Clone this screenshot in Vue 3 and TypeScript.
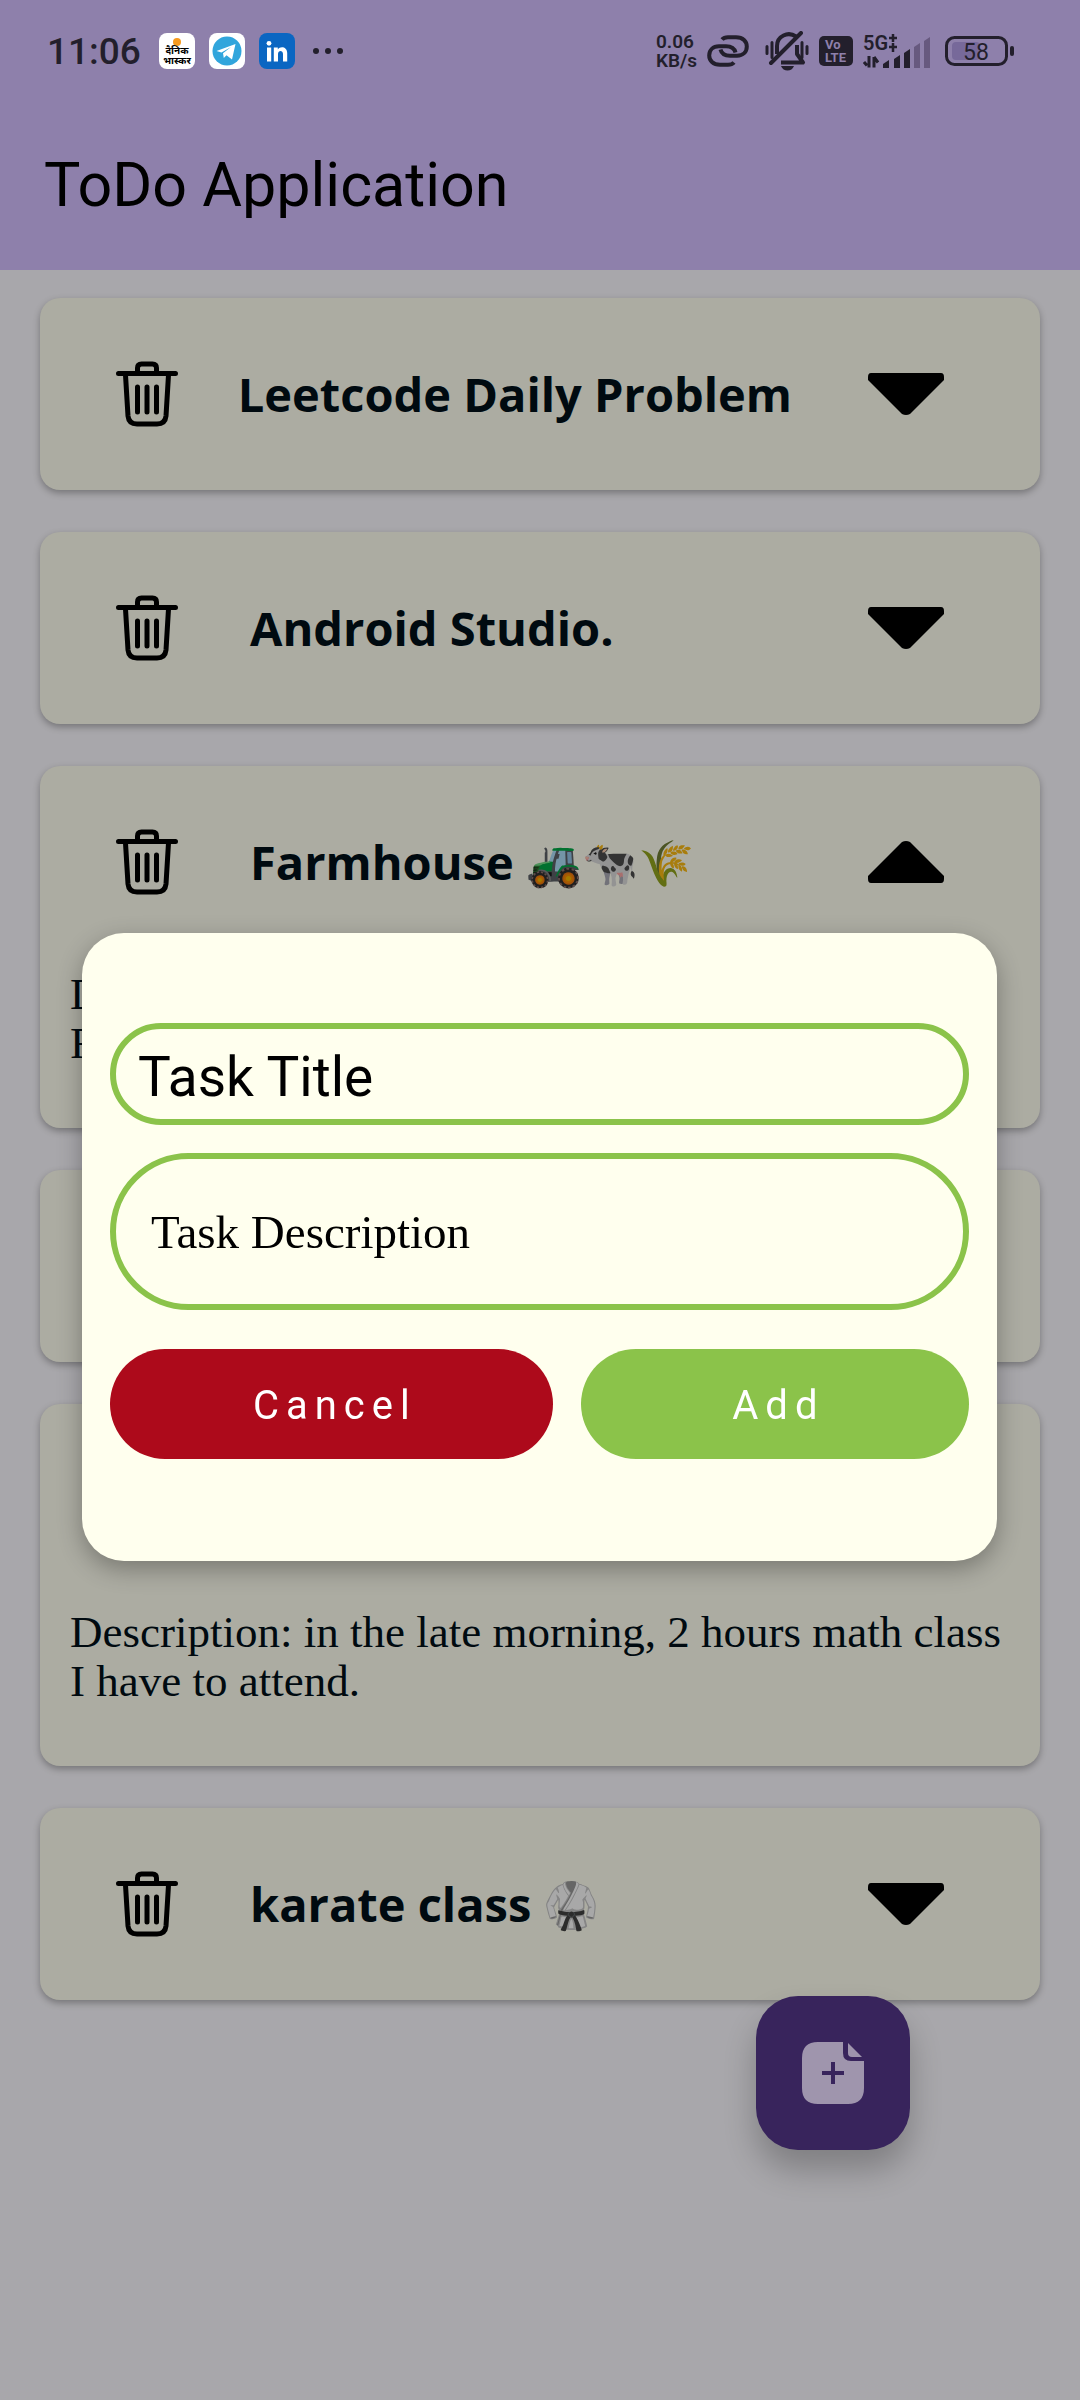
<script setup lang="ts">
import { ref } from 'vue'

interface Task {
  id: number
  title: string
  emoji: string
  description: string
  open: boolean
}

const tasks = ref<Task[]>([
  { id: 1, title: 'Leetcode Daily Problem', emoji: '', description: '', open: false },
  { id: 2, title: 'Android Studio.', emoji: '', description: '', open: false },
  { id: 3, title: 'Farmhouse', emoji: '🚜🐄🌾', description: 'Description:\nFarmhouse', open: true },
  { id: 4, title: '', emoji: '', description: '', open: false },
  {
    id: 5,
    title: '',
    emoji: '',
    description: 'Description: in the late morning, 2 hours math class I have to attend.',
    open: true,
  },
  { id: 6, title: 'karate class', emoji: '🥋', description: '', open: false },
])

const newTitle = ref('')
const newDescription = ref('')
</script>

<template>
  <div class="screen">
    <header class="top">
      <div class="status">
        <div class="status-left">
          <span class="time">11:06</span>
          <svg class="app" viewBox="0 0 36 36">
            <rect width="36" height="36" rx="8" fill="#fff" />
            <circle cx="18" cy="9" r="4" fill="#f79a1e" />
            <text x="18" y="21" class="hindi">दैनिक</text>
            <text x="18" y="31" class="hindi">भास्कर</text>
          </svg>
          <svg class="app" viewBox="0 0 36 36">
            <rect width="36" height="36" rx="8" fill="#fff" />
            <circle cx="18" cy="18" r="14.5" fill="#31a5dc" />
            <path d="M7.5 18 L26.5 11 L23 26.5 L17.5 22.3 L14.8 25 L14 20.2 L22 14 L12.5 19.6 Z" fill="#fff" />
          </svg>
          <svg class="app" viewBox="0 0 36 36">
            <rect width="36" height="36" rx="8" fill="#0a66c2" />
            <circle cx="10" cy="10.3" r="2.4" fill="#fff" />
            <path d="M8 14.5h4.200v14H8z" fill="#fff" />
            <path d="M14.800 14.500h4v2c2.300-3.800 9.400-3 9.400 3.500v8.500h-4.200v-7.500c0-4-5-4-5 0v7.500h-4.200z" fill="#fff" />
          </svg>
          <svg class="dots" viewBox="0 0 32 8">
            <circle cx="4" cy="4" r="3" />
            <circle cx="16" cy="4" r="3" />
            <circle cx="28" cy="4" r="3" />
          </svg>
        </div>
        <div class="status-right">
          <span class="speed"><span>0.06</span><span>KB/s</span></span>
          <svg class="link" viewBox="0 0 42 32" fill="none" stroke="#231f2c" stroke-width="4">
            <path d="M15 4.500 Q17 2.200 21 2.200 H29 C36 2.200 39.800 6.500 39.800 11.500 C39.800 17 36 20.700 30 20.700 H23 C17.500 20.700 14.500 18.500 13.500 14.500" />
            <path d="M27 27.500 Q25 29.800 21 29.800 H13 C6 29.800 2.200 25.500 2.200 20.500 C2.200 15 6 11.300 12 11.300 H19 C24.500 11.300 27.500 13.500 28.500 17.500" />
          </svg>
          <svg class="bell" viewBox="0 0 44 40" fill="none" stroke="#231f2c" stroke-width="3">
            <path d="M2 15.500v7M7 11.500v15M42 15.500v7M37 11.500v15" stroke-linecap="round" />
            <path d="M12 23V15C12 5 23 0 31 5.500" stroke-width="4" />
            <path d="M32 14v9l6 8.500H16" stroke-width="4" stroke-linejoin="round" />
            <path d="M6 32L36 2" stroke-width="4" stroke-linecap="round" />
            <path d="M16 35h13q-2 4.500-6.500 4.500T16 35z" fill="#231f2c" stroke="none" />
          </svg>
          <svg class="volte" viewBox="0 0 34 30">
            <rect width="34" height="30" rx="5" fill="#231f2c" />
            <text x="6" y="13" class="vo">Vo</text>
            <text x="6" y="26" class="vo">LTE</text>
          </svg>
          <svg class="signal" viewBox="0 -6 68 48">
            <text x="0" y="17" class="five">5G</text>
            <path d="M26 5h8M30 1v8M26 14h8M30 10v9" stroke="#231f2c" stroke-width="2.500" />
            <path d="M1 29l3 3.500M6 23v11.500M11 34.500V24M11 24l4 5.500" stroke="#231f2c" stroke-width="3" />
            <path d="M20 35v-4l6-4v8zM31 35V26l6-4v13zM41 35V20l6-4v19z" fill="#231f2c" />
            <path d="M51 35V14l6-4v25zM61 35V8l6-4v31z" fill="#67597f" />
          </svg>
          <svg class="battery" viewBox="0 0 70 30">
            <rect x="1.500" y="1.500" width="60" height="27" rx="8" fill="none" stroke="#231f2c" stroke-width="3" />
            <rect x="7" y="6" width="28" height="18" rx="4" fill="#77699a" />
            <rect x="65" y="10" width="4" height="10" rx="2" fill="#231f2c" />
            <text x="31" y="24" class="charge">58</text>
          </svg>
        </div>
      </div>
      <h1>ToDo Application</h1>
    </header>

    <main class="list">
      <article v-for="task in tasks" :key="task.id" class="card">
        <div class="row">
          <button type="button" class="icon-button" aria-label="Delete">
            <svg class="trash" viewBox="0 0 62 66" fill="none" stroke="#000" stroke-width="5" stroke-linecap="round">
              <path d="M2.500 12.500h57M21.500 11V7q0-4 4-4h11q4 0 4 4v4" />
              <path d="M9.500 14l2.500 41q.8 8 9 8h20q8.200 0 9-8l2.500-41" />
              <path d="M21.500 26v25M31 26v25M40.500 26v25" />
            </svg>
          </button>
          <h2 v-if="task.title">
            <span>{{ task.title }}</span>
            <span v-if="task.emoji" class="emoji">{{ task.emoji }}</span>
          </h2>
          <button type="button" class="icon-button toggle" aria-label="Toggle" @click="task.open = !task.open">
            <svg class="arrow" :class="{ up: task.open }" viewBox="0 0 76 42">
              <path d="M3 0H73Q76 0 76 4V7L42 41Q38 43 34 41L0 7V4Q0 0 3 0Z" />
            </svg>
          </button>
        </div>
        <p v-if="task.open">{{ task.description }}</p>
      </article>
    </main>

    <button type="button" class="fab" aria-label="New task">
      <svg viewBox="0 0 62 62">
        <path d="M16 0H41V11Q41 19 49 19H62V46Q62 62 46 62H16Q0 62 0 46V16Q0 0 16 0Z" fill="#9f95ad" />
        <path d="M46 1L60 15H50Q46 15 46 11Z" fill="#9f95ad" />
        <path d="M20 31H42M31 20V42" stroke="#38245c" stroke-width="4" />
      </svg>
    </button>

    <div class="overlay">
      <form class="dialog" role="dialog" @submit.prevent>
        <input v-model="newTitle" class="title-input" type="text" placeholder="Task Title" aria-label="Task Title" />
        <input
          v-model="newDescription"
          class="description-input"
          type="text"
          placeholder="Task Description"
          aria-label="Task Description"
        />
        <div class="actions">
          <button type="button" class="cancel">Cancel</button>
          <button type="submit" class="add">Add</button>
        </div>
      </form>
    </div>
  </div>
</template>

<style>
body {
  background: #a8a7ab;
}
</style>

<style scoped>
.screen {
  min-height: 100vh;
  background: #a8a7ab;
  font-family: Roboto, sans-serif;
  color: #000;
}
button {
  font-family: inherit;
  border: 0;
  padding: 0;
  cursor: pointer;
}
svg {
  display: block;
}
.top {
  height: 270px;
  background: #8e80ab;
}
.status {
  display: flex;
  justify-content: space-between;
  align-items: center;
  height: 102px;
  padding: 0 65px 0 47px;
  color: #231f2c;
}
.status-left,
.status-right {
  display: flex;
  align-items: center;
}
.status-left {
  gap: 14px;
}
.time {
  font-size: 37px;
  font-weight: 500;
  margin-right: 4px;
}
.app {
  width: 36px;
  height: 36px;
}
.hindi {
  font: 700 10px 'Noto Sans Devanagari', 'Noto Sans', sans-serif;
  text-anchor: middle;
}
.dots {
  width: 32px;
  height: 8px;
  margin-left: 3px;
  fill: #231f2c;
}
.status-right {
  gap: 10px;
}
.speed {
  display: flex;
  flex-direction: column;
  font-size: 19px;
  line-height: 19px;
  font-weight: 600;
}
.link {
  width: 42px;
  height: 32px;
}
.bell {
  width: 44px;
  height: 40px;
  margin-left: 6px;
}
.volte {
  width: 34px;
  height: 30px;
}
.vo {
  font: 700 13px Roboto, sans-serif;
  fill: #8e80ab;
}
.signal {
  width: 68px;
  height: 48px;
}
.five {
  font: 600 20px Roboto, sans-serif;
  fill: #231f2c;
}
.battery {
  width: 70px;
  height: 30px;
  margin-left: 4px;
}
.charge {
  font: 400 23px Roboto, sans-serif;
  fill: #231f2c;
  text-anchor: middle;
}
h1 {
  margin: 0;
  padding: 47px 44px;
  font-size: 61px;
  line-height: 72px;
  font-weight: 400;
}
.list {
  display: flex;
  flex-direction: column;
  gap: 42px;
  padding: 28px 40px;
}
.card {
  border-radius: 20px;
  background: #acaca2;
  box-shadow: 0 3px 7px rgba(0, 0, 0, 0.3);
}
.row {
  display: flex;
  align-items: center;
  height: 192px;
  padding: 0 96px 0 76px;
}
.icon-button {
  flex: none;
  background: none;
}
.trash {
  width: 62px;
  height: 66px;
}
.toggle {
  margin-left: auto;
}
.arrow {
  width: 76px;
  height: 42px;
}
.arrow.up {
  transform: rotate(180deg);
}
/* Long titles grow towards the bin icon, short ones start at the left edge. */
h2 {
  display: flex;
  flex: 1;
  justify-content: flex-end;
  min-width: 0;
  margin: 0 76px 0 72px;
  font-family: 'Open Sans', sans-serif;
  font-size: 47px;
  line-height: 60px;
  font-weight: 700;
  color: #000a10;
  white-space: nowrap;
}
h2::after {
  content: '';
  flex: 1;
}
.emoji {
  margin-left: 12px;
  font-size: 45px;
  filter: brightness(0.66);
}
p {
  margin: 0;
  padding: 12px 28px 60px 30px;
  font-family: 'Liberation Serif', serif;
  font-size: 45px;
  line-height: 49px;
  color: #000a10;
  white-space: pre-line;
}
.fab {
  position: fixed;
  right: 170px;
  bottom: 250px;
  display: grid;
  place-items: center;
  width: 154px;
  height: 154px;
  border-radius: 42px;
  background: #38245c;
  box-shadow: 0 20px 32px rgba(0, 0, 0, 0.24);
}
.fab svg {
  width: 62px;
  height: 62px;
}
.overlay {
  position: fixed;
  inset: 0;
  display: grid;
  align-items: center;
  padding: 94px 83px 0 82px;
}
.dialog {
  display: flex;
  flex-direction: column;
  gap: 28px;
  padding: 90px 28px 102px;
  border-radius: 42px;
  background: #ffffee;
  box-shadow: 0 8px 24px rgba(0, 0, 0, 0.3);
}
input {
  box-sizing: border-box;
  width: 100%;
  border: 6px solid #8bc34a;
  border-radius: 80px;
  background: transparent;
  outline: none;
}
input::placeholder {
  color: #000;
  opacity: 1;
}
.title-input {
  height: 102px;
  padding: 6px 22px 0;
  font: 400 55px Roboto, sans-serif;
}
.description-input {
  height: 157px;
  padding: 0 35px;
  font: 400 47px 'Liberation Serif', serif;
}
.actions {
  display: flex;
  gap: 28px;
  padding-top: 11px;
}
.actions button {
  height: 110px;
  padding: 2px 0 0 7px;
  border-radius: 55px;
  color: #fff;
  font-size: 40px;
  letter-spacing: 7px;
}
.actions .cancel {
  flex: 8;
  background: #ad0a1b;
}
.actions .add {
  flex: 7;
  background: #8bc34a;
}
</style>
